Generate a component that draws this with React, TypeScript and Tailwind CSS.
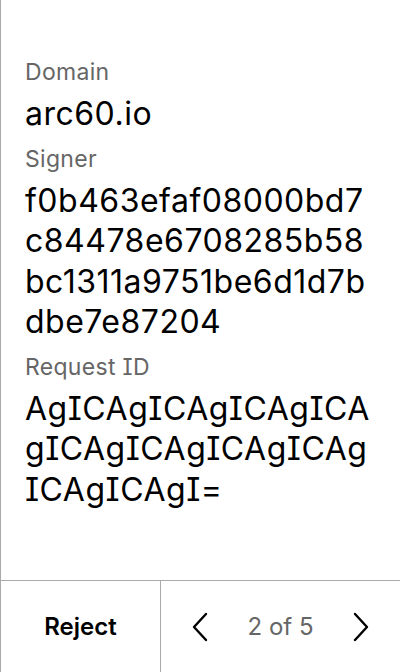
import React from 'react';

const fields = [
  { label: 'Domain', value: 'arc60.io' },
  { label: 'Signer', value: 'f0b463efaf08000bd7c84478e6708285b58bc1311a9751be6d1d7bdbe7e87204' },
  { label: 'Request ID', value: 'AgICAgICAgICAgICAgICAgICAgICAgICAgICAgICAgI=' },
];

const Chevron: React.FC<{ dir: 'left' | 'right' }> = ({ dir }) => (
  <svg width="18" height="30" viewBox="0 0 18 30" fill="none" stroke="#000" strokeWidth="2.4" strokeLinecap="round" strokeLinejoin="round">
    {dir === 'left' ? <path d="M15 2L3 15l12 13" /> : <path d="M3 2l12 13L3 28" />}
  </svg>
);

export default function App() {
  return (
    <div className="flex h-[672px] w-[400px] flex-col border-l border-[#aaaaaa] bg-white font-['Inter',sans-serif] [font-feature-settings:'cv08']">
      <div className="flex flex-1 flex-col px-6 pt-[56px]">
        {fields.map((f) => (
          <div key={f.label} className="mb-[8px]">
            <div className="mb-[6px] text-[23px] leading-[32px] tracking-[0.3px] text-[#666666]">{f.label}</div>
            <div className="break-all text-[32px] leading-[40.5px] tracking-[0.5px] text-black">{f.value}</div>
          </div>
        ))}
      </div>
      <div className="flex h-[92px] border-t border-[#aaaaaa]">
        <button className="flex w-[159px] items-center justify-center text-[24px] font-semibold text-black">
          Reject
        </button>
        <div className="flex flex-1 items-center justify-between border-l border-[#aaaaaa] px-[30px]">
          <Chevron dir="left" />
          <span className="text-[24px] text-[#666666]">2 of 5</span>
          <Chevron dir="right" />
        </div>
      </div>
    </div>
  );
}
